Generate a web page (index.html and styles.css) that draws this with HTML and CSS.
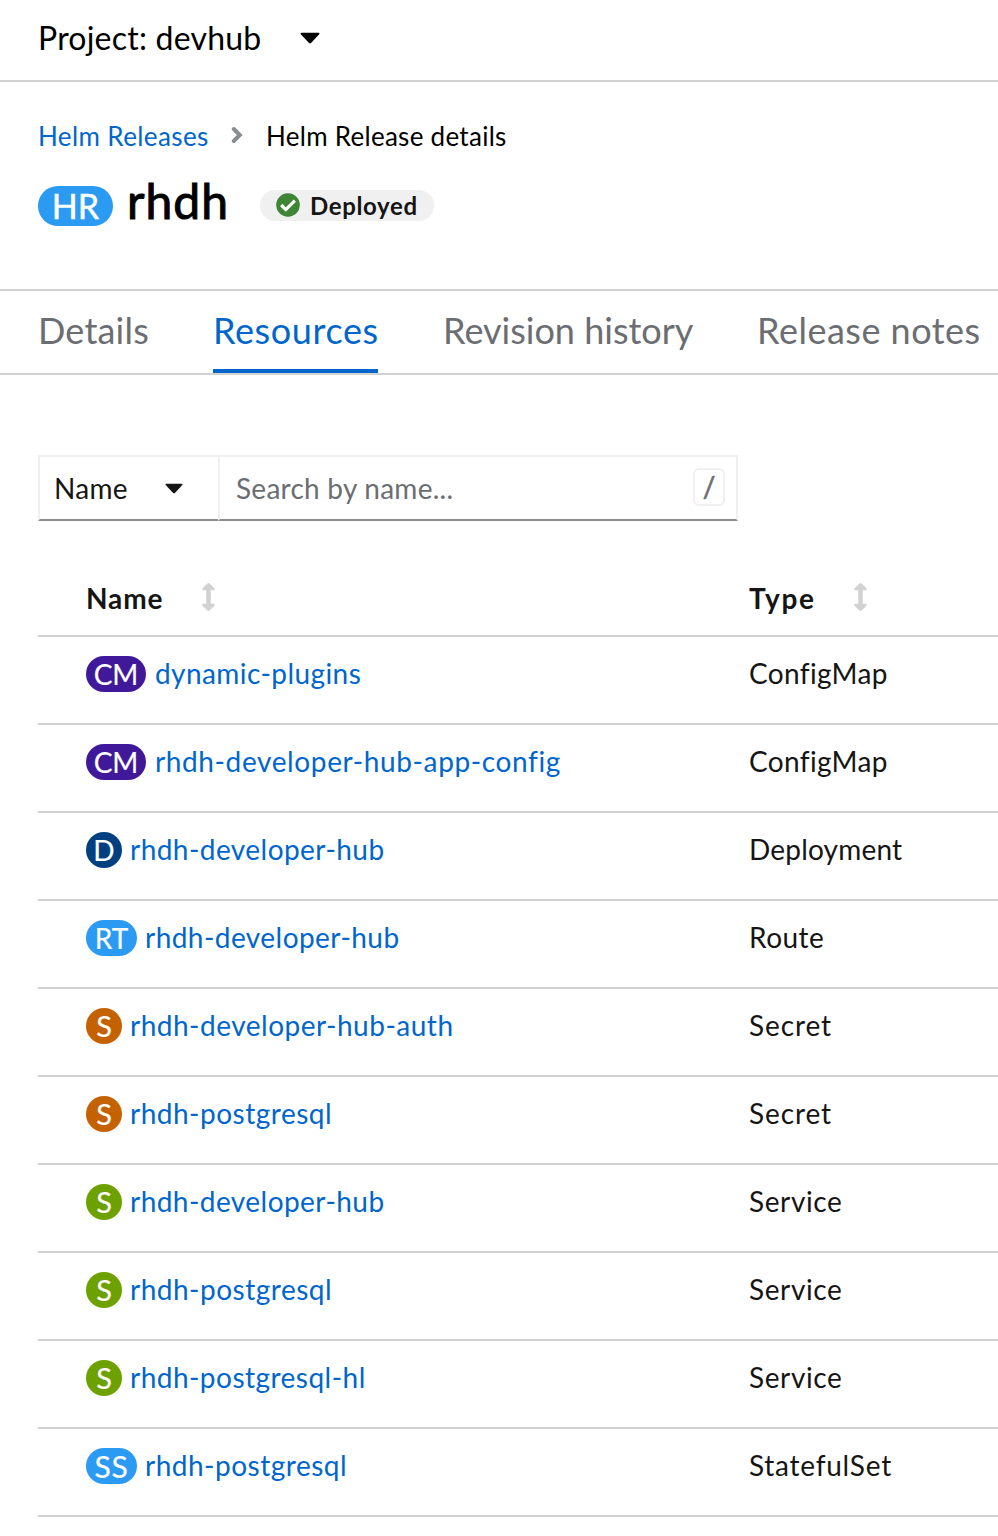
FILE: index.html
```
<!DOCTYPE html>
<html lang="en">
<head>
<meta charset="utf-8">
<title>Helm Release details</title>
<link rel="stylesheet" href="styles.css">
</head>
<body>
<header class="project-bar">
  <span class="project-name">Project: devhub</span>
  <svg class="project-caret" width="20" height="12" viewBox="0 0 20 12"><path d="M1.500.8h17q1.600.2.5 1.700L11 11q-1 .9-2 0L1 2.500Q-.1 1 1.500.8z"/></svg>
</header>
<section class="page-head">
  <nav class="breadcrumb">
    <a class="crumb-link">Helm Releases</a>
    <svg class="crumb-sep" width="12" height="18" viewBox="0 0 12 18"><path d="M2.800 3l6 6-6 6" fill="none" stroke="#8a8d90" stroke-width="4" stroke-linecap="round"/></svg>
    <span class="crumb-current">Helm Release details</span>
  </nav>
  <div class="title-row">
    <span class="title-badge">HR</span>
    <h1 class="title">rhdh</h1>
    <span class="status">
      <svg width="24" height="24" viewBox="0 0 24 24"><circle cx="12" cy="12" r="11.800" fill="#3e8635"/><path d="M5.200 12l4.600 4.600 9-9" fill="none" stroke="#fff" stroke-width="3.200"/></svg>
      <span class="status-text">Deployed</span>
    </span>
  </div>
</section>
<nav class="tabs">
  <a class="tab tab-details">Details</a>
  <a class="tab tab-resources active">Resources</a>
  <a class="tab tab-history">Revision history</a>
  <a class="tab tab-notes">Release notes</a>
</nav>
<main class="content">
  <div class="filter">
    <div class="filter-select"><span class="select-label">Name</span>
      <svg class="filter-caret" width="18" height="11" viewBox="0 0 20 12"><path d="M1.500.8h17q1.600.2.5 1.700L11 11q-1 .9-2 0L1 2.500Q-.1 1 1.500.8z" fill="#151515"/></svg>
    </div>
    <div class="filter-search"><span class="placeholder">Search by name...</span><kbd class="key">/</kbd></div>
  </div>
  <div class="table">
    <div class="row head">
      <div class="cell"><span class="th-name">Name</span><svg class="sort" width="13" height="28" viewBox="0 0 13 28"><path d="M5.500.500q1-.9 2 0l4.800 4.500q1.300 2-.8 2.300H8.800v13.400h2.700q2.100.3.800 2.300l-4.800 4.500q-1 .9-2 0L.7 23q-1.300-2 .8-2.300h2.700V7.300H1.500Q-.6 7 .7 5z"/></svg></div>
      <div class="cell"><span class="th-type">Type</span><svg class="sort" width="13" height="28" viewBox="0 0 13 28"><path d="M5.500.500q1-.9 2 0l4.800 4.500q1.300 2-.8 2.300H8.800v13.400h2.700q2.100.3.800 2.300l-4.800 4.500q-1 .9-2 0L.7 23q-1.300-2 .8-2.300h2.700V7.300H1.500Q-.6 7 .7 5z"/></svg></div>
    </div>
    <div class="row"><div class="cell"><span class="badge cm">CM</span><a class="link plugins">dynamic-plugins</a></div><div class="cell type configmap">ConfigMap</div></div>
    <div class="row"><div class="cell"><span class="badge cm">CM</span><a class="link app-config">rhdh-developer-hub-app-config</a></div><div class="cell type configmap">ConfigMap</div></div>
    <div class="row"><div class="cell"><span class="badge dep">D</span><a class="link hub">rhdh-developer-hub</a></div><div class="cell type deployment">Deployment</div></div>
    <div class="row"><div class="cell"><span class="badge rt">RT</span><a class="link hub">rhdh-developer-hub</a></div><div class="cell type route">Route</div></div>
    <div class="row"><div class="cell"><span class="badge secret-badge">S</span><a class="link auth">rhdh-developer-hub-auth</a></div><div class="cell type secret">Secret</div></div>
    <div class="row"><div class="cell"><span class="badge secret-badge">S</span><a class="link postgres">rhdh-postgresql</a></div><div class="cell type secret">Secret</div></div>
    <div class="row"><div class="cell"><span class="badge service-badge">S</span><a class="link hub">rhdh-developer-hub</a></div><div class="cell type service">Service</div></div>
    <div class="row"><div class="cell"><span class="badge service-badge">S</span><a class="link postgres">rhdh-postgresql</a></div><div class="cell type service">Service</div></div>
    <div class="row"><div class="cell"><span class="badge service-badge">S</span><a class="link postgres-hl">rhdh-postgresql-hl</a></div><div class="cell type service">Service</div></div>
    <div class="row"><div class="cell"><span class="badge ss">SS</span><a class="link postgres">rhdh-postgresql</a></div><div class="cell type statefulset">StatefulSet</div></div>
  </div>
</main>
</body>
</html>
```
FILE: styles.css
```
* { box-sizing: border-box; }
body { margin: 0; height: 1536px; overflow: hidden; background: #fff; color: #151515; font-family: Lato, "Open Sans", sans-serif; font-size: 28px; white-space: nowrap; font-variant-ligatures: none; }
svg { display: block; flex: none; }
.project-bar { height: 82px; border-bottom: 2px solid #d2d2d2; padding: 0 0 5px 38px; display: flex; align-items: center; color: #000; }
.project-name { width: 262px; font-size: 32px; letter-spacing: .22px; }
.project-caret { margin-top: 1px; }
.page-head { height: 207px; padding: 36px 0 0 38px; }
.breadcrumb { display: flex; align-items: center; height: 36px; font-size: 26px; color: #000; }
.crumb-link { width: 193px; color: #06c; letter-spacing: .4px; }
.crumb-sep { margin-bottom: 2px; }
.crumb-current { margin-left: 23px; letter-spacing: .28px; }
.title-row { display: flex; height: 60px; margin-top: 17px; align-items: center; }
.title-badge { width: 75px; height: 40px; border-radius: 20px; margin-top: 9px; background: #2b9af3; color: #fff; font-size: 34px; line-height: 39px; text-align: center; -webkit-text-stroke: .5px #fff; }
.title { margin: 0 0 0 14px; width: 133px; font-size: 48px; line-height: 58px; font-weight: 400; color: #000; letter-spacing: 1px; -webkit-text-stroke: 1px #000; }
.status { width: 174px; height: 31px; border-radius: 16px; margin-top: 8px; padding-left: 16px; display: flex; align-items: center; background: #f0f0f0; font-size: 24px; line-height: 31px; font-weight: 700; }
.status-text { margin-left: 10px; letter-spacing: .65px; }
.tabs { display: flex; height: 86px; border-top: 2px solid #d2d2d2; border-bottom: 2px solid #d2d2d2; padding-left: 38px; color: #6a6e73; font-size: 36px; line-height: 78px; }
.tab { height: 82px; margin-right: 65px; flex: none; }
.tab-details { width: 110px; letter-spacing: .2px; }
.tab-resources { width: 165px; letter-spacing: .6px; }
.tab-history { width: 249px; }
.tab-notes { letter-spacing: .5px; }
.active { color: #06c; border-bottom: 4px solid #06c; }
.content { padding: 80px 0 0 38px; }
.filter { width: 700px; height: 66px; display: flex; line-height: 60px; }
.filter-select { width: 180px; border: 2px solid #f0f0f0; border-right: 0; border-bottom-color: #8a8d90; display: flex; align-items: center; padding-left: 14px; }
.select-label { width: 111px; letter-spacing: .3px; }
.filter-caret { margin-top: 1px; }
.filter-search { width: 520px; border: 2px solid #f0f0f0; border-bottom-color: #8a8d90; display: flex; align-items: center; justify-content: space-between; padding: 0 11px 0 16px; color: #6a6e73; }
.placeholder { letter-spacing: .25px; }
.key { width: 32px; height: 38px; border: 2px solid #f0f0f0; border-radius: 6px; font: 28px/32px Lato, sans-serif; text-align: center; margin-bottom: 2px; -webkit-text-stroke: .6px #6a6e73; }
.table { padding-top: 37px; }
.row { height: 88px; border-bottom: 2px solid #d2d2d2; padding: 19px 0 0 48px; display: grid; grid-template-columns: 663px 1fr; line-height: 35px; }
.row.head { height: 79px; padding-top: 23px; font-weight: 700; line-height: 34px; }
.cell { display: flex; height: 36px; }
.th-name { width: 116px; letter-spacing: .9px; }
.th-type { width: 105px; letter-spacing: 1.6px; }
.sort { margin-top: 2px; fill: #d2d2d2; }
.badge { width: 36px; height: 36px; border-radius: 18px; color: #fff; text-align: center; margin-right: 8px; line-height: 36px; -webkit-text-stroke: .2px #fff; }
.badge.cm { width: 60px; margin-right: 9px; background: #40199a; }
.badge.dep { background: #004080; }
.badge.rt { width: 51px; background: #2b9af3; }
.badge.ss { width: 51px; background: #2b9af3; font-size: 30px; letter-spacing: .8px; }
.secret-badge { background: #c46100; font-size: 29px; }
.service-badge { background: #6ca100; font-size: 29px; }
.link { color: #06c; }
.plugins { letter-spacing: .42px; }
.app-config { letter-spacing: .62px; }
.hub { letter-spacing: .45px; }
.auth { letter-spacing: .5px; }
.postgres { letter-spacing: .5px; }
.postgres-hl { letter-spacing: .47px; }
.configmap { letter-spacing: .35px; }
.deployment { letter-spacing: .2px; }
.route { letter-spacing: .5px; }
.secret { letter-spacing: .9px; }
.service { letter-spacing: .6px; }
.statefulset { letter-spacing: .75px; }
```
